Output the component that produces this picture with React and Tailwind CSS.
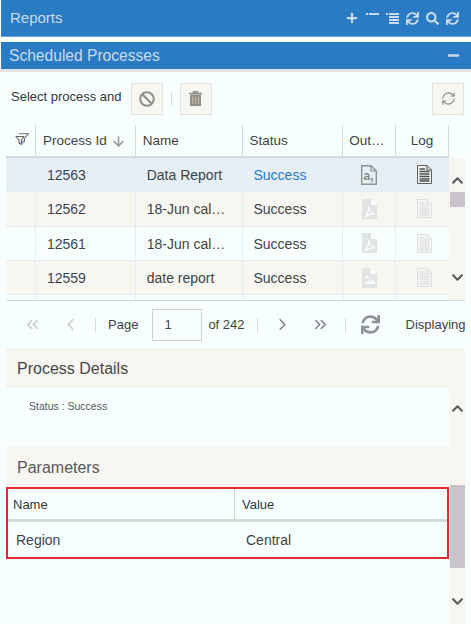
import { FaBan, FaChevronDown, FaChevronUp, FaMinus, FaPlus, FaSearch, FaSync } from 'react-icons/fa';
import { ChevronLeft, ChevronRight, ChevronsLeft, ChevronsRight, RefreshCw, ArrowDown } from 'lucide-react';

const rows = [
  { id: '12563', name: 'Data Report', out: 'text' },
  { id: '12562', name: '18-Jun cal…', out: 'pdf' },
  { id: '12561', name: '18-Jun cal…', out: 'pdf' },
  { id: '12559', name: 'date report', out: 'image' },
];

const columns = ['w-[100px]', 'w-[108px]', 'w-[100px]', 'w-[53px]', 'w-[53px]'];

const TreeIcon = ({ long }) => (
  <svg width="13" height="13" viewBox="0 0 13 13" fill="#c9dced">
    <rect x="0" y="1" width="2" height="2" />
    <rect x="3" y="1" width="10" height="2" />
    {long && (
      <>
        <rect x="3" y="4" width="10" height="2" />
        <rect x="3" y="7" width="10" height="2" />
        <rect x="3" y="10" width="10" height="2" />
      </>
    )}
  </svg>
);

const TrashIcon = () => (
  <svg width="13" height="15" viewBox="0 0 13 15">
    <path d="M4.500 2V.7H8.500V2M0 2.500H13" fill="none" stroke="#8f8f8f" strokeWidth="1.400" />
    <path d="M1 3.500H12V15H1Z" fill="#8f8f8f" />
    <path d="M3.500 5.500V13M6.500 5.500V13M9.500 5.500V13" stroke="#c7b995" strokeWidth="1.200" />
  </svg>
);

const FileShape = ({ children }) => (
  <svg width="15" height="20" viewBox="0 0 15 20">
    <path d="M0 0H9L15 6V20H0Z" fill="#e2e3e2" />
    <path d="M9 0L15 6H9Z" fill="#f8ffff" />
    {children}
  </svg>
);

const OutputIcon = ({ type }) => {
  if (type === 'text') {
    return (
      <svg width="16" height="20" viewBox="0 0 16 20">
        <path d="M.7.7H10L15.300 6V19.300H.7Z" fill="#e9edf0" stroke="#8f9294" strokeWidth="1.400" />
        <path d="M10 .7V6H15.300" fill="none" stroke="#8f9294" strokeWidth="1.200" />
        <text x="2.500" y="15" fontFamily="Liberation Sans, sans-serif" fontSize="12" fontWeight="700" fill="#85888a">a,</text>
      </svg>
    );
  }
  if (type === 'pdf') {
    return (
      <FileShape>
        <path d="M3 18C6 14 7 10 6.500 7C7.500 12 9.500 14 13 15C9 14.500 6 16 3 18Z" fill="none" stroke="#f8ffff" strokeWidth="1.200" />
      </FileShape>
    );
  }
  return (
    <FileShape>
      <circle cx="5" cy="9" r="1.500" fill="#f8ffff" />
      <path d="M3 16L7 12L9 14L11 11L14 16Z" fill="#f8ffff" />
    </FileShape>
  );
};

const LogIcon = ({ active }) => {
  const line = active ? '#4d5358' : '#dfe2e1';
  return (
    <svg width="15" height="19" viewBox="0 0 15 19">
      <path d="M.5.5H10L14.500 5V18.500H.5Z" fill={active ? '#f4f5ee' : '#f5f6f5'} stroke={active ? '#5a6066' : '#dcdfde'} />
      <path d="M10 .5V5H14.500" fill="none" stroke={line} />
      <path d="M2.500 4H8M2.500 6.500H12.500M2.500 9H12.500M2.500 11.500H12.500M2.500 14H12.500M2.500 16H12.500" stroke={line} strokeWidth="1.300" />
    </svg>
  );
};

const FilterIcon = () => (
  <svg width="14" height="12" viewBox="0 0 14 12" fill="none">
    <path d="M1 3.500H9L6.500 7V11.500L4 10V7Z" fill="#f8f3e6" stroke="#5f6468" strokeWidth="1.100" strokeLinejoin="round" />
    <path d="M4 .8H13.500L9.500 5.500V9" stroke="#6f7478" strokeWidth="1.100" />
    <path d="M8 7.500V10.500" stroke="#3f84c4" strokeWidth="1.200" />
  </svg>
);

const ToolButton = ({ children }) => (
  <button className="flex h-[32px] w-[32px] items-center justify-center border border-[#e3e2dc] bg-[#f8f6f0] text-[#8f8f8f]">
    {children}
  </button>
);

const Divider = () => <div className="h-[14px] w-px bg-[#d6dad9]" />;

export default function App() {
  return (
    <div className="h-[624px] w-[471px] overflow-hidden bg-[#f8ffff] font-['Liberation_Sans',Arial,sans-serif] text-[14px] text-[#3f4347]">
      <div className="ml-px flex h-[37px] items-center justify-between border-b border-[#6ea6da] bg-[#2a7ac4] pl-[9px] pr-[12px] text-[#c9dced]">
        <span className="text-[15px]">Reports</span>
        <div className="flex items-center gap-[7px]">
          <FaPlus size={12} className="mr-px" />
          <TreeIcon />
          <TreeIcon long />
          <FaSync size={13} />
          <FaSearch size={13} />
          <FaSync size={13} />
        </div>
      </div>
      <div className="mt-[5px] ml-px flex h-[27px] items-center justify-between bg-[#2a7ac4] pl-[8px] pr-[11px] text-[#c9dced]">
        <span className="text-[15.6px]">Scheduled Processes</span>
        <FaMinus size={13} />
      </div>
      <div className="h-[3px] bg-[#e3e6e8]" />

      <div className="flex h-[53px] items-center pl-[11px] pr-[7px]">
        <span className="mb-[3px] text-[13px] text-[#33373b]">Select process and</span>
        <div className="ml-[9px]">
          <ToolButton>
            <FaBan size={16} />
          </ToolButton>
        </div>
        <div className="ml-[8px]">
          <Divider />
        </div>
        <div className="ml-[8px]">
          <ToolButton>
            <TrashIcon />
          </ToolButton>
        </div>
        <div className="ml-auto">
          <ToolButton>
            <RefreshCw size={15} strokeWidth={1.7} className="text-[#85888a]" />
          </ToolButton>
        </div>
      </div>

      <div className="ml-[6px] w-[459px]">
        <div className="flex h-[33px] w-[443px] items-center border-b-2 border-[#d3dadb] text-[13.5px]">
          <div className="flex h-full w-[30px] items-center justify-center border-r border-[#d3dadb] pb-[4px] pl-[3px]">
            <FilterIcon />
          </div>
          <div className={`flex h-full items-center border-r border-[#d3dadb] pl-[7px] pt-[1px] ${columns[0]}`}>
            Process Id
            <ArrowDown size={15} strokeWidth={2.6} className="ml-[4px] text-[#9a9a9a]" />
          </div>
          <div className={`flex h-full items-center border-r border-[#d3dadb] pl-[7px] pt-[1px] ${columns[1]}`}>Name</div>
          <div className={`flex h-full items-center border-r border-[#d3dadb] pl-[6px] pt-[1px] ${columns[2]}`}>Status</div>
          <div className={`flex h-full items-center border-r border-[#d3dadb] pl-[6px] pt-[1px] ${columns[3]}`}>Out…</div>
          <div className={`flex h-full items-center justify-center border-r border-[#d3dadb] pt-[1px] ${columns[4]}`}>Log</div>
        </div>

        <div className="flex h-[143px] border-b border-[#d3dadb]">
          <div className="w-[443px] overflow-hidden">
            {rows.map((row, i) => (
              <div
                key={row.id}
                className={`flex h-[34.3px] items-center border-b border-[#e4edf3] ${i === 0 ? 'bg-[#e6eef6]' : i % 2 === 1 ? 'bg-[#f8f6f0]' : 'bg-[#f8ffff]'}`}
              >
                <div className="h-full w-[30px] border-r border-[#e4edf3]" />
                <div className={`flex h-full items-center border-r border-[#e4edf3] pl-[11px] pt-[2px] ${columns[0]}`}>{row.id}</div>
                <div className={`flex h-full items-center border-r border-[#e4edf3] pl-[11px] pt-[2px] ${columns[1]}`}>{row.name}</div>
                <div className={`flex h-full items-center border-r border-[#e4edf3] pl-[10px] pt-[2px] ${columns[2]} ${i === 0 ? 'text-[#2a7ac4]' : ''}`}>Success</div>
                <div className={`flex h-full items-center justify-center border-r border-[#e4edf3] ${columns[3]}`}>
                  <OutputIcon type={row.out} />
                </div>
                <div className={`flex h-full items-center justify-center pl-[3px] ${columns[4]}`}>
                  <LogIcon active={i === 0} />
                </div>
              </div>
            ))}
            <div className="flex h-[6px]">
              <div className="w-[30px] border-r border-[#e4edf3]" />
              <div className={`border-r border-[#e4edf3] ${columns[0]}`} />
              <div className={`border-r border-[#e4edf3] ${columns[1]}`} />
              <div className={`border-r border-[#e4edf3] ${columns[2]}`} />
              <div className={`border-r border-[#e4edf3] ${columns[3]}`} />
            </div>
          </div>
          <div className="flex w-[16px] flex-col items-center bg-[#f8f6f0] text-[#55595d]">
            <FaChevronUp size={13} className="mt-[16px]" />
            <div className="mt-[5px] h-[15px] w-[15px] bg-[#c9c3cc]" />
            <FaChevronDown size={13} className="mt-[64px]" />
          </div>
        </div>

        <div className="flex h-[47px] items-center overflow-hidden whitespace-nowrap pl-[17px] text-[13px]">
          <ChevronsLeft size={19} className="shrink-0 text-[#c9cbca]" />
          <ChevronLeft size={19} className="ml-[19px] shrink-0 text-[#c9cbca]" />
          <div className="ml-[15px] shrink-0">
            <Divider />
          </div>
          <span className="ml-[12px]">Page</span>
          <div className="ml-[14px] h-[32px] w-[50px] shrink-0 border border-[#cfd3d2] pl-[11px] pt-[5px]">1</div>
          <span className="ml-[6px]">of 242</span>
          <div className="ml-[12px] shrink-0">
            <Divider />
          </div>
          <ChevronRight size={19} className="ml-[15px] shrink-0 text-[#7d8184]" />
          <ChevronsRight size={19} className="ml-[19px] shrink-0 text-[#7d8184]" />
          <div className="ml-[15px] shrink-0">
            <Divider />
          </div>
          <FaSync size={19} className="ml-[15px] shrink-0 text-[#8f9294]" />
          <span className="ml-[26px]">Displaying</span>
        </div>

        <div className="flex h-[40px] items-center bg-[#f8f6f0] pl-[11px] pt-[2px] text-[16px] text-[#44484c]">Process Details</div>

        <div className="flex h-[236px]">
          <div className="w-[443px]">
            <div className="h-[59px] pl-[23px] pt-[11px] text-[10.5px] leading-[14px] text-[#55595d]">Status : Success</div>
            <div className="flex h-[40px] items-center bg-[#f8f6f0] pl-[11px] pt-[2px] text-[16px] text-[#55595d]">Parameters</div>
            <div className="h-[72px] border-2 border-[#e02b2f]">
              <div className="flex h-[33px] border-b-[3px] border-[#d3dadb]">
                <div className="flex w-[227px] items-center border-r border-[#d3dadb] pl-[5px] pt-[2px] text-[13px] text-[#33373b]">Name</div>
                <div className="flex flex-1 items-center pl-[7px] pt-[2px] text-[13px] text-[#33373b]">Value</div>
              </div>
              <div className="flex h-[35px] items-center pt-[2px]">
                <div className="w-[228px] pl-[8px]">Region</div>
                <div className="flex-1 pl-[10px]">Central</div>
              </div>
            </div>
          </div>
          <div className="flex w-[16px] flex-col items-center bg-[#f8f6f0] text-[#55595d]">
            <FaChevronUp size={13} className="mt-[14px]" />
            <div className="mt-[70px] h-[83px] w-[15px] self-end bg-[#c9c3cc]" />
            <FaChevronDown size={13} className="mt-[27px]" />
          </div>
        </div>
      </div>
    </div>
  );
}
